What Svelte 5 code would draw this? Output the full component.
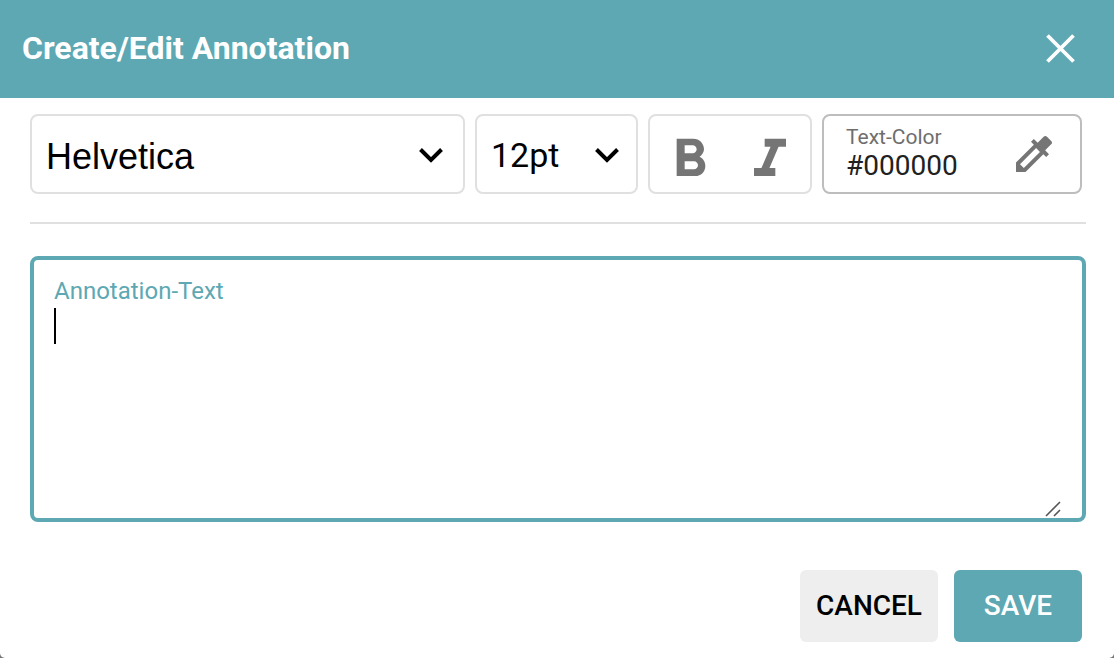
<script>
  let font = $state('Helvetica');
  let size = $state('12pt');
  let bold = $state(false);
  let italic = $state(false);
  let color = $state('#000000');
  let text = $state('');
</script>

<section class="dialog" role="dialog" aria-labelledby="dialog-title">
  <header>
    <h1 id="dialog-title">Create/Edit Annotation</h1>
    <button class="close" type="button" aria-label="Close">
      <svg viewBox="0 0 32 32" width="32" height="32" aria-hidden="true">
        <path d="M3.5 3.5l26 26M29.5 3.5l-26 26" fill="none" stroke="#fff" stroke-width="3.8" />
      </svg>
    </button>
  </header>

  <form>
    <div class="toolbar">
      <div class="box family">
        <select aria-label="Font family" bind:value={font}>
          <option>Helvetica</option>
          <option>Courier</option>
          <option>Times</option>
        </select>
        <svg class="chevron" viewBox="0 0 24 16" width="24" height="16" aria-hidden="true">
          <path d="M1.5 2.5L12 13 22.5 2.5" fill="none" stroke="#000" stroke-width="4" />
        </svg>
      </div>

      <div class="box size">
        <select aria-label="Font size" bind:value={size}>
          <option>10pt</option>
          <option>12pt</option>
          <option>14pt</option>
        </select>
        <svg class="chevron" viewBox="0 0 24 16" width="24" height="16" aria-hidden="true">
          <path d="M1.5 2.5L12 13 22.5 2.5" fill="none" stroke="#000" stroke-width="4" />
        </svg>
      </div>

      <div class="box styles">
        <button type="button" aria-label="Bold" aria-pressed={bold} onclick={() => (bold = !bold)}>
          <svg viewBox="0 0 24 24" width="64" height="64" aria-hidden="true">
            <path d="M15.6 10.79c.97-.67 1.65-1.77 1.65-2.79 0-2.26-1.75-4-4-4H7v14h7.04c2.09 0 3.71-1.7 3.71-3.79 0-1.52-.86-2.82-2.15-3.42zM10 6.5h3c.83 0 1.5.67 1.5 1.5s-.67 1.5-1.5 1.5h-3v-3zm3.5 9H10v-3h3.5c.83 0 1.5.67 1.5 1.5s-.67 1.5-1.5 1.5z" />
          </svg>
        </button>
        <button type="button" aria-label="Italic" aria-pressed={italic} onclick={() => (italic = !italic)}>
          <svg viewBox="0 0 24 24" width="64" height="64" aria-hidden="true">
            <path d="M10 4v3h2.21l-3.42 8H6v3h8v-3h-2.21l3.42-8H18V4z" />
          </svg>
        </button>
      </div>

      <div class="box color">
        <div class="color-field">
          <label for="text-color">Text-Color</label>
          <input id="text-color" type="text" bind:value={color} />
        </div>
        <button type="button" aria-label="Pick colour">
          <svg viewBox="0 0 24 24" width="48" height="48" aria-hidden="true">
            <path d="M20.71 5.63l-2.34-2.34c-.39-.39-1.02-.39-1.41 0l-3.12 3.12-1.93-1.91-1.41 1.41 1.42 1.42L3 16.25V21h4.75l8.92-8.92 1.42 1.42 1.41-1.41-1.92-1.92 3.12-3.12c.4-.4.4-1.03.01-1.42zM6.92 19L5 17.08l8.06-8.06 1.92 1.92L6.92 19z" />
          </svg>
        </button>
      </div>
    </div>

    <hr />

    <div class="note">
      <label for="note-text">Annotation-Text</label>
      <textarea id="note-text" bind:value={text}></textarea>
      {#if !text}<span class="caret"></span>{/if}
      <svg class="grip" viewBox="0 0 16 16" width="16" height="16" aria-hidden="true">
        <path d="M1 15L15 1M9 15l6-6" fill="none" stroke="#555" stroke-width="1.6" />
      </svg>
    </div>

    <footer>
      <button class="cancel" type="button">CANCEL</button>
      <button class="save" type="submit">SAVE</button>
    </footer>
  </form>
</section>

<style>
  :global(body) {
    background: #777;
  }

  * {
    box-sizing: border-box;
  }

  .dialog {
    display: flex;
    flex-direction: column;
    min-height: 100vh;
    overflow: hidden;
    border-radius: 0 0 5px 5px;
    background: #fff;
    font-family: Roboto, sans-serif;
    color: #000;
  }

  header {
    display: flex;
    align-items: center;
    justify-content: space-between;
    min-height: 98px;
    padding: 0 38px 2px 22px;
    background: #5da8b3;
  }

  h1 {
    margin: 0;
    font-size: 32px;
    font-weight: 700;
    line-height: 40px;
    color: #fff;
  }

  button {
    display: flex;
    align-items: center;
    justify-content: center;
    padding: 0;
    border: 0;
    background: none;
    font-family: inherit;
    cursor: pointer;
  }

  form {
    display: flex;
    flex: 1;
    flex-direction: column;
    padding: 16px 28px 16px 30px;
  }

  .toolbar {
    display: flex;
    gap: 10px;
    padding-right: 4px;
  }

  .box {
    display: flex;
    height: 80px;
    border: 2px solid #e0e0e0;
    border-radius: 8px;
  }

  .family,
  .size {
    position: relative;
  }

  .family {
    flex: 1;
  }

  .size {
    width: 163px;
  }

  select {
    width: 100%;
    border: 0;
    border-radius: 6px;
    appearance: none;
    background: transparent;
    color: #000;
  }

  .family select {
    padding: 4px 48px 0 14px;
    font: 36px "Liberation Sans", Helvetica, sans-serif;
  }

  .size select {
    padding: 2px 48px 0 14px;
    font: 34px Roboto, sans-serif;
  }

  .chevron {
    position: absolute;
    top: 31px;
    right: 20px;
    pointer-events: none;
  }

  .size .chevron {
    right: 17px;
  }

  .styles button {
    width: 80px;
    padding-top: 12px;
  }

  .styles svg,
  .color svg {
    fill: #757575;
  }

  .color {
    width: 260px;
    align-items: center;
    justify-content: space-between;
    padding: 0 22px;
    border-color: #bdbdbd;
  }

  .color-field {
    display: flex;
    flex-direction: column;
    padding-bottom: 2px;
  }

  .color label {
    font-size: 21px;
    line-height: 24px;
    color: #6e6e6e;
  }

  .color input {
    width: 140px;
    height: 32px;
    padding: 0;
    border: 0;
    background: none;
    font: 28px Roboto, sans-serif;
    color: #212121;
  }

  hr {
    width: 100%;
    height: 2px;
    margin: 28px 0 32px;
    border: 0;
    background: #e0e0e0;
  }

  .note {
    position: relative;
    display: flex;
    flex: 1;
    flex-direction: column;
    padding: 16px 20px 0;
    border: 4px solid #5da8b3;
    border-radius: 8px;
  }

  .note label {
    font-size: 24px;
    line-height: 30px;
    color: #5da8b3;
  }

  textarea {
    flex: 1;
    padding: 0;
    border: 0;
    outline: 0;
    resize: none;
    background: none;
    font: 32px/40px Roboto, sans-serif;
  }

  .caret {
    position: absolute;
    top: 48px;
    left: 20px;
    width: 2px;
    height: 36px;
    background: #000;
  }

  .grip {
    position: absolute;
    right: 21px;
    bottom: 1px;
    pointer-events: none;
  }

  footer {
    display: flex;
    justify-content: flex-end;
    gap: 16px;
    margin-top: 48px;
    padding-right: 4px;
  }

  footer button {
    height: 72px;
    padding-bottom: 2px;
    border-radius: 6px;
    font-size: 28px;
    font-weight: 500;
  }

  .cancel {
    width: 138px;
    background: #eee;
    color: #000;
  }

  .save {
    width: 128px;
    background: #5da8b3;
    color: #fff;
  }
</style>
